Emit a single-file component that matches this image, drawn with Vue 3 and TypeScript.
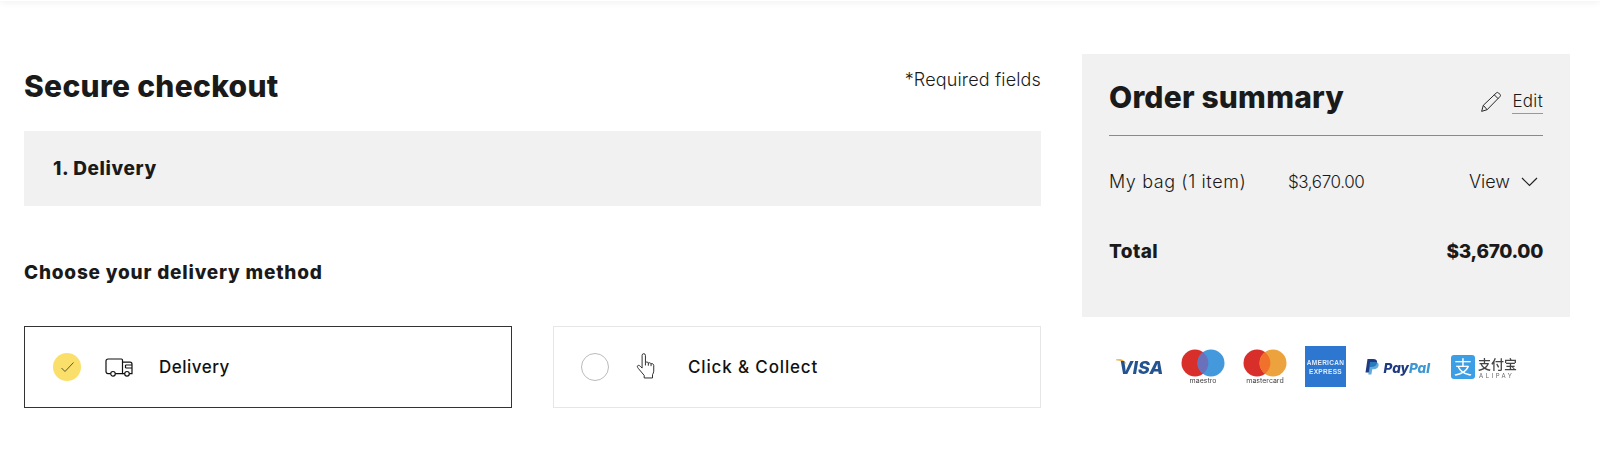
<script setup lang="ts">
const bagLabel = 'My bag (1 item)'
const price = '$3,670.00'
</script>

<template>
  <div class="page">
    <div class="topbar"></div>
    <main class="layout">
      <section class="checkout">
        <div class="checkout-head">
          <h1 class="title">Secure checkout</h1>
          <span class="required">*Required fields</span>
        </div>
        <div class="step">1. Delivery</div>
        <h2 class="method-title">Choose your delivery method</h2>
        <div class="methods">
          <div class="method is-active">
            <span class="radio radio--on">
              <svg width="15" height="12" viewBox="0 0 15 12" fill="none">
                <path d="M1.5 7 5 10.5 13.5 1.5" stroke="#5c5436" stroke-width="1" />
              </svg>
            </span>
            <svg class="method-icon" width="28" height="19" viewBox="0 0 28 19" fill="none" stroke="#111" stroke-width="1.2">
              <path d="M5.6 15.6H3a2 2 0 0 1-2-2V3a2 2 0 0 1 2-2h13.5a1 1 0 0 1 1 1v13.6h-7.2" />
              <path d="M17.5 4.2H25a2 2 0 0 1 2 2v9.4h-2.6M19.8 15.6h-2.3" />
              <circle cx="8" cy="15.8" r="2.3" />
              <circle cx="22" cy="15.8" r="2.3" />
              <path d="M20.5 7h6.5M20.5 10h6.5M20.5 7v3" />
            </svg>
            <span class="method-label">Delivery</span>
          </div>
          <div class="method method--collect">
            <span class="radio"></span>
            <svg class="method-icon method-icon--hand" width="20" height="26" viewBox="1.5 0.5 17.5 25" fill="none" stroke="#222" stroke-width="0.9">
              <path d="M6.5 15V2.8a1.6 1.6 0 0 1 3.2 0v6.7c1.2-.6 2.4-.3 2.8.6 1-.5 2.2-.2 2.6.8 1-.4 2.6 0 2.6 1.6V18c0 1.5-.8 2.4-1.2 3.4v3.1H8.5V22L3 15.5c-1.2-1.5-1.5-2.5-.5-3s2 .3 4 2.5Z" />
              <path d="M9.7 9.5v3M12.5 10.1v2.6M15.1 10.9v2.2" />
            </svg>
            <span class="method-label">Click &amp; Collect</span>
          </div>
        </div>
      </section>

      <aside class="sidebar">
        <div class="summary">
          <div class="summary-head">
            <h2 class="summary-title">Order summary</h2>
            <div class="edit">
              <svg width="22" height="22" viewBox="0 0 20 20" fill="none" stroke="#222" stroke-width="0.9">
                <path d="M1.5 18.5 3 13 14.8 1.8a1.5 1.5 0 0 1 2.1 0l1.2 1.2a1.5 1.5 0 0 1 0 2.1L6.5 17Z" />
                <path d="M3 13l3.5 4M13 3.5l3.5 3.5" />
              </svg>
              <span class="edit-link">Edit</span>
            </div>
          </div>
          <div class="bag-row">
            <span class="bag-label">{{ bagLabel }}</span>
            <span class="bag-price">{{ price }}</span>
            <span class="view">
              View
              <svg width="17" height="10" viewBox="0 0 17 10" fill="none" stroke="#222" stroke-width="1.2">
                <path d="M1 1l7.5 7.5L16 1" />
              </svg>
            </span>
          </div>
          <div class="total-row">
            <span class="total-label">Total</span>
            <span class="total-price">{{ price }}</span>
          </div>
        </div>

        <div class="payments">
          <svg class="logo" width="47" height="20" viewBox="0 0 47 20">
            <path d="M0 2.5c5-1 9 0 11 6-2-3.500-5-5-11-5.300Z" fill="#e8a93c" />
            <text x="3" y="16.5" class="visa-text">VISA</text>
          </svg>
          <svg class="logo" width="44" height="36" viewBox="0 0 44 36">
            <circle cx="14" cy="14" r="13.5" fill="#d92f2b" />
            <circle cx="30" cy="14" r="13.5" fill="#4499dc" />
            <path d="M22 3.2a13.5 13.5 0 0 1 0 21.6a13.5 13.5 0 0 1 0-21.6Z" fill="#6b70ba" />
            <text x="22" y="34" class="card-text">maestro</text>
          </svg>
          <svg class="logo" width="44" height="36" viewBox="0 0 44 36">
            <circle cx="14" cy="14" r="13.5" fill="#d92f2b" />
            <circle cx="30" cy="14" r="13.5" fill="#eda33d" />
            <path d="M22 3.2a13.5 13.5 0 0 1 0 21.6a13.5 13.5 0 0 1 0-21.6Z" fill="#f0702c" />
            <text x="22" y="34" class="card-text">mastercard</text>
          </svg>
          <svg class="logo" width="41" height="41" viewBox="0 0 41 41">
            <rect width="41" height="41" fill="#2e77d0" />
            <text x="20.5" y="19" class="amex-text">AMERICAN</text>
            <text x="20.5" y="28" class="amex-text">EXPRESS</text>
          </svg>
          <svg class="logo logo--paypal" width="74" height="20" viewBox="0 0 74 20">
            <path d="M3.5 2h5.5c3.2 0 4.500 1.600 4 4-.6 2.800-2.600 4-5.500 4H6l-1 5.500H1.500Z" fill="#1f3a80" />
            <path d="M6 5h5c2.800 0 4 1.500 3.600 3.500-.5 2.500-2.400 3.700-4.800 3.700H8.300l-.9 5.300H4.300Z" fill="#2f8fd0" opacity=".75" />
            <text x="19.5" y="15.5" class="paypal-text"><tspan fill="#1f3a80">Pay</tspan><tspan fill="#3d97d3">Pal</tspan></text>
          </svg>
          <svg class="logo" width="67" height="24" viewBox="0 0 67 24">
            <rect width="24" height="24" rx="3" fill="#3c9fe6" />
            <text x="12" y="19" class="alipay-mark">支</text>
            <text x="27" y="13.5" class="alipay-cn">支付宝</text>
            <text x="28" y="23" class="alipay-en">ALIPAY</text>
          </svg>
        </div>
      </aside>
    </main>
  </div>
</template>

<style>
body {
  background: #fff;
}
</style>

<style scoped>
.page {
  width: 1600px;
  height: 462px;
  overflow: hidden;
  font-family: Inter, "Noto Sans CJK SC", sans-serif;
  color: #1a1a1a;
}

.topbar {
  height: 1px;
  box-shadow: 0 0 6px rgba(0, 0, 0, 0.28);
}

.layout {
  display: flex;
  gap: 41px;
  padding: 53px 0 0 24px;
}

.checkout {
  width: 1017px;
}

.checkout-head {
  display: flex;
  justify-content: space-between;
  height: 77px;
}

.title {
  margin: 13px 0 0;
  font-size: 30px;
  line-height: 38px;
  font-weight: 800;
  letter-spacing: 0.3px;
}

.required {
  margin-top: 14px;
  font-size: 18px;
  line-height: 24px;
  font-weight: 300;
  letter-spacing: 0.15px;
}

.step {
  height: 75px;
  padding-left: 29px;
  background: #f1f1f1;
  font-size: 19px;
  line-height: 75px;
  font-weight: 800;
  letter-spacing: 0.6px;
}

.method-title {
  margin: 55px 0 41px;
  font-size: 19px;
  line-height: 24px;
  font-weight: 800;
  letter-spacing: 0.8px;
}

.methods {
  display: grid;
  grid-template-columns: 1fr 1fr;
  gap: 41px;
}

.method {
  display: flex;
  align-items: center;
  height: 82px;
  padding-left: 28px;
  box-sizing: border-box;
  border: 1px solid #e6e6e6;
}

.method.is-active {
  border-color: #333;
}

.method--collect {
  padding-left: 27px;
}

.radio {
  display: flex;
  align-items: center;
  justify-content: center;
  width: 28px;
  height: 28px;
  box-sizing: border-box;
  border: 1.5px solid #bbb;
  border-radius: 50%;
}

.radio--on {
  border: none;
  background: #fae06b;
}

.method-icon {
  margin-left: 24px;
}

.method-icon--hand {
  margin-left: 27px;
  margin-right: 6px;
  margin-bottom: 2px;
}

.method-label {
  margin-left: 26px;
  font-size: 17px;
  font-weight: 500;
  letter-spacing: 0.5px;
  color: #111;
}

.method--collect .method-label {
  letter-spacing: 0.85px;
}

.sidebar {
  width: 488px;
}

.summary {
  height: 263px;
  padding: 0 27px;
  box-sizing: border-box;
  background: #f1f1f1;
}

.summary-head {
  display: flex;
  justify-content: space-between;
  align-items: flex-end;
  height: 82px;
  padding-bottom: 18px;
  box-sizing: border-box;
  border-bottom: 1px solid #8a8a8a;
}

.summary-title {
  margin: 0 0 1px;
  font-size: 30px;
  line-height: 38px;
  font-weight: 800;
  letter-spacing: 0.2px;
}

.edit {
  display: flex;
  align-items: center;
  gap: 10px;
  margin-bottom: 3px;
}

.edit-link {
  font-size: 17px;
  font-weight: 300;
  line-height: 24px;
  letter-spacing: 0.3px;
  border-bottom: 1px solid #999;
}

.bag-row {
  display: flex;
  align-items: center;
  margin-top: 34px;
  font-size: 18px;
  line-height: 24px;
  font-weight: 300;
}

.bag-label {
  width: 179px;
  letter-spacing: 0.6px;
}

.bag-price {
  font-size: 17px;
  letter-spacing: -0.4px;
}

.view {
  display: flex;
  align-items: center;
  gap: 11px;
  margin-left: auto;
  padding-right: 5px;
}

.total-row {
  display: flex;
  justify-content: space-between;
  margin-top: 46px;
  font-size: 19px;
  line-height: 24px;
  font-weight: 800;
}

.total-label {
  letter-spacing: 0.4px;
}

.total-price {
  letter-spacing: -0.3px;
}

.payments {
  display: flex;
  align-items: center;
  gap: 18px;
  margin-top: 29px;
  padding-left: 34px;
}

.logo {
  flex: none;
  filter: blur(0.6px);
}

.logo--paypal {
  margin-right: -5px;
  overflow: visible;
}

.visa-text {
  font: italic 800 18px Inter, sans-serif;
  fill: #24538f;
}

.card-text {
  font: 400 7px Inter, sans-serif;
  fill: #444;
  text-anchor: middle;
}

.amex-text {
  font: 700 6.5px "Liberation Sans", sans-serif;
  fill: #dfeaf8;
  letter-spacing: 0.3px;
  text-anchor: middle;
}

.paypal-text {
  font: italic 800 13.5px Inter, sans-serif;
}

.alipay-mark {
  font: 400 18px "Noto Sans CJK SC", sans-serif;
  fill: #fff;
  text-anchor: middle;
}

.alipay-cn {
  font: 500 13px "Noto Sans CJK SC", sans-serif;
  fill: #444;
}

.alipay-en {
  font: 400 6px Inter, sans-serif;
  fill: #666;
  letter-spacing: 2.5px;
}
</style>
